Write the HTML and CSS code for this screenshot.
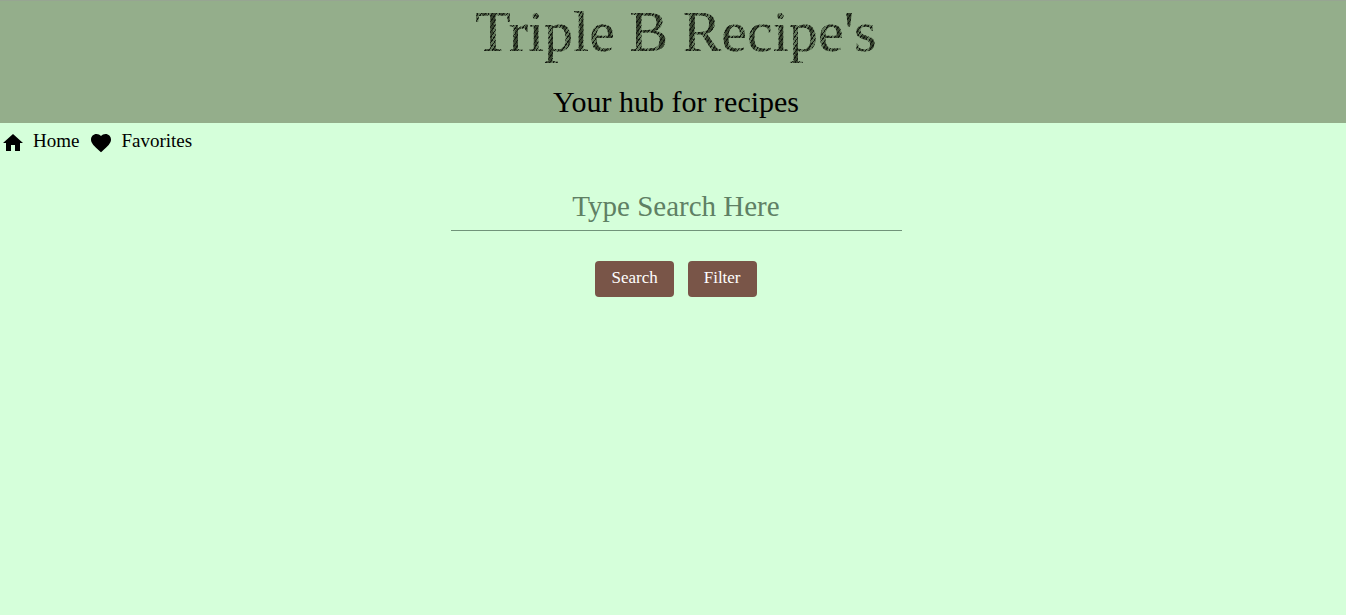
FILE: index.html
```html
<!DOCTYPE html>
<html lang="en">
<head>
<meta charset="utf-8">
<meta name="viewport" content="width=device-width, initial-scale=1">
<title>Triple B Recipe's</title>
<link rel="stylesheet" href="styles.css">
</head>
<body>
<header class="banner">
  <h1 class="title">Triple B Recipe's</h1>
  <p class="tagline">Your hub for recipes</p>
</header>
<nav class="nav">
  <a class="nav-link" href="#home">
    <svg class="icon" viewBox="0 0 24 24" aria-hidden="true"><path d="M10 20v-6h4v6h5v-8h3L12 3 2 12h3v8z"/></svg>
    <span>Home</span>
  </a>
  <a class="nav-link" href="#favorites">
    <svg class="icon" viewBox="0 0 24 24" aria-hidden="true"><path d="M12 21.35l-1.45-1.32C5.4 15.36 2 12.28 2 8.5 2 5.42 4.42 3 7.5 3c1.74 0 3.41.81 4.5 2.09C13.09 3.81 14.76 3 16.5 3 19.58 3 22 5.42 22 8.5c0 3.78-3.4 6.86-8.55 11.54z"/></svg>
    <span>Favorites</span>
  </a>
</nav>
<main>
  <form class="search">
    <input class="search-input" type="text" placeholder="Type Search Here" aria-label="Type Search Here">
    <div class="actions">
      <button class="btn" type="submit">Search</button>
      <button class="btn" type="button">Filter</button>
    </div>
  </form>
</main>
</body>
</html>
```
FILE: styles.css
```css
* {
  box-sizing: border-box;
}

body {
  margin: 0;
  min-height: 100vh;
  background: #d5ffda;
  color: #000;
  font-family: "Liberation Serif", serif;
}

.banner {
  display: flex;
  flex-direction: column;
  align-items: center;
  gap: 22px;
  padding: 0 0 5px 6px;
  border-top: 1px solid #97a592;
  background: #94ae8b;
}

.title {
  margin: 0;
  font-size: 58px;
  line-height: 62px;
  font-weight: 400;
  color: transparent;
  background:
    repeating-linear-gradient(125deg, #141a12 0 1px, transparent 1px 3px),
    repeating-linear-gradient(100deg, #37442f 0 5px, #617659 5px 9px);
  background-clip: text;
  -webkit-background-clip: text;
}

.tagline {
  margin: 0;
  font-size: 30px;
  line-height: 33px;
}

.nav {
  display: flex;
  gap: 10px;
  padding: 6px 0 0 1px;
}

.nav-link {
  display: flex;
  align-items: flex-start;
  gap: 8px;
  color: #000;
  font-size: 19px;
  line-height: 24px;
  text-decoration: none;
}

.icon {
  width: 24px;
  height: 24px;
  margin-top: 2px;
  fill: #000;
}

.search {
  display: flex;
  flex-direction: column;
  align-items: center;
  gap: 30px;
  padding: 27px 0 0 6px;
}

.search-input {
  width: 451px;
  max-width: 100%;
  height: 49px;
  padding: 0;
  border: 0;
  border-bottom: 1px solid #71937a;
  background: transparent;
  color: #000;
  font-family: inherit;
  font-size: 29px;
  text-align: center;
}

.search-input::placeholder {
  color: #5f8064;
  opacity: 1;
}

.actions {
  display: flex;
  gap: 14px;
}

.btn {
  height: 36px;
  padding: 0 16px 2px;
  border: 0;
  border-radius: 4px;
  background: #795548;
  color: #fff;
  font-family: inherit;
  font-size: 17px;
}
```
